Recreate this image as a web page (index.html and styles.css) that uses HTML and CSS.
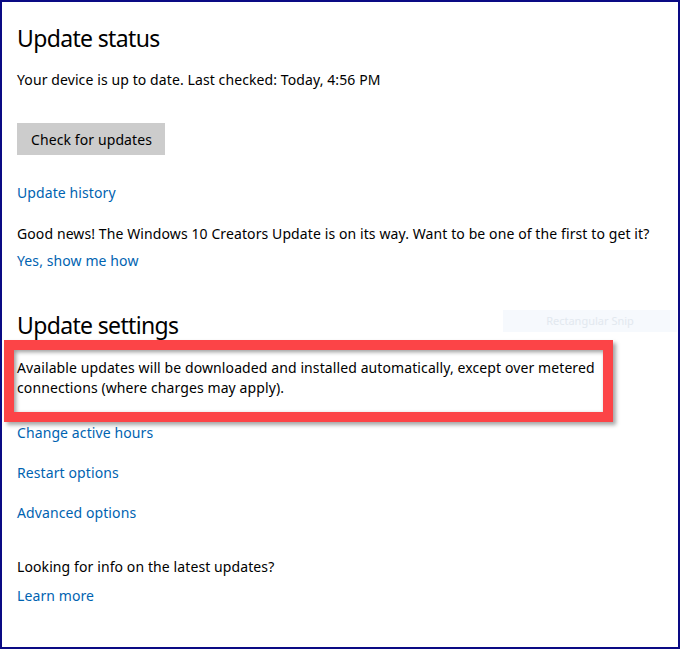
FILE: index.html
```html
<!DOCTYPE html>
<html>
<head>
<meta charset="utf-8">
<link rel="stylesheet" href="styles.css">
</head>
<body>
<div class="frame">
  <div class="content">
    <h1 class="heading h-status">Update status</h1>
    <p class="text t-uptodate">Your device is up to date. Last checked: Today, 4:56 PM</p>
    <div class="btn-row"><button class="btn">Check for updates</button></div>
    <a class="link l-history">Update history</a>
    <p class="text t-news">Good news! The Windows 10 Creators Update is on its way. Want to be one of the first to get it?</p>
    <a class="link l-yes">Yes, show me how</a>
    <h1 class="heading h-settings">Update settings</h1>
    <p class="text t-avail">Available updates will be downloaded and installed automatically, except over metered connections (where charges may apply).</p>
    <a class="link l-change">Change active hours</a>
    <a class="link l-restart">Restart options</a>
    <a class="link l-advanced">Advanced options</a>
    <p class="text t-looking">Looking for info on the latest updates?</p>
    <a class="link l-learn">Learn more</a>
  </div>
  <div class="snip">Rectangular Snip</div>
  <div class="highlight"></div>
</div>
</body>
</html>
```
FILE: styles.css
```css
* { box-sizing: border-box; }
html, body { margin: 0; padding: 0; background: #fff; }
body { font-family: "Noto Sans", "Open Sans", sans-serif; color: #000; }

.frame {
  position: relative;
  width: 680px;
  height: 649px;
  border: 2px solid #0a0a84;
  overflow: hidden;
}

.content {
  display: flex;
  flex-direction: column;
  align-items: flex-start;
  padding-left: 15px;
}

.heading {
  margin: 0;
  font-size: 23px;
  font-weight: 400;
  line-height: 32px;
  letter-spacing: -0.65px;
  color: #000;
}

.text, .link {
  margin: 0;
  font-size: 14px;
  line-height: 20px;
  letter-spacing: 0.1px;
}

.link { color: #0063b1; text-decoration: none; cursor: pointer; }

.btn-row { display: flex; }
.btn {
  height: 32px;
  padding: 0 13px 0 14px;
  border: none;
  background: #cccccc;
  font-family: inherit;
  font-size: 14px;
  letter-spacing: 0.1px;
  color: #000;
}

.h-status { margin-top: 20px; }
.t-uptodate { margin-top: 16px; }
.btn-row { margin-top: 33px; }
.l-history { margin-top: 28px; }
.t-news { margin-top: 21px; }
.l-yes { margin-top: 7px; }
.h-settings { margin-top: 38px; }
.t-avail { margin-top: 17px; max-width: 590px; }
.l-change { margin-top: 25px; }
.l-restart { margin-top: 20px; }
.l-advanced { margin-top: 20px; }
.t-looking { margin-top: 34px; }
.l-learn { margin-top: 9px; }

.snip {
  position: absolute;
  left: 501px;
  top: 308px;
  width: 174px;
  height: 22px;
  background: #f6f9fd;
  color: #e2e8ef;
  font-size: 11px;
  line-height: 22px;
  text-align: center;
}

.highlight {
  position: absolute;
  left: 2px;
  top: 338px;
  width: 609px;
  height: 82px;
  border: 10px solid #fc4447;
  box-shadow: 3px 3px 4px rgba(0,0,0,0.35), inset 2px 2px 4px rgba(0,0,0,0.4);
}
```
